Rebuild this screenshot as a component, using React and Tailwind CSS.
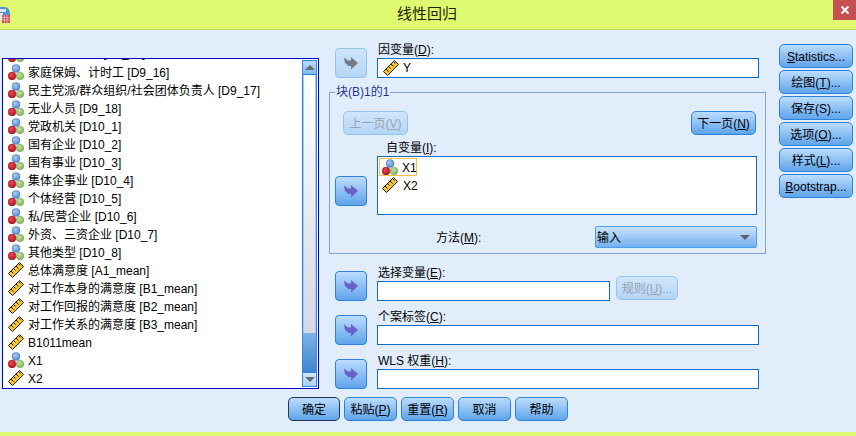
const variables = [
  ["n", "个体工商业户 [D9_15]"],
  ["n", "家庭保姆、计时工 [D9_16]"],
  ["n", "民主党派/群众组织/社会团体负责人 [D9_17]"],
  ["n", "无业人员 [D9_18]"],
  ["n", "党政机关 [D10_1]"],
  ["n", "国有企业 [D10_2]"],
  ["n", "国有事业 [D10_3]"],
  ["n", "集体企事业 [D10_4]"],
  ["n", "个体经营 [D10_5]"],
  ["n", "私/民营企业 [D10_6]"],
  ["n", "外资、三资企业 [D10_7]"],
  ["n", "其他类型 [D10_8]"],
  ["s", "总体满意度 [A1_mean]"],
  ["s", "对工作本身的满意度 [B1_mean]"],
  ["s", "对工作回报的满意度 [B2_mean]"],
  ["s", "对工作关系的满意度 [B3_mean]"],
  ["s", "B1011mean"],
  ["n", "X1"],
  ["s", "X2"],
];

const NominalIcon = () => (
  <svg width="16" height="16" viewBox="0 0 16 16" className="shrink-0">
    <defs>
      <radialGradient id="ballBlue" cx="0.4" cy="0.35" r="0.7">
        <stop offset="0" stopColor="#a9cdf2" />
        <stop offset="1" stopColor="#4f86c9" />
      </radialGradient>
      <radialGradient id="ballGreen" cx="0.4" cy="0.35" r="0.7">
        <stop offset="0" stopColor="#c6e3a2" />
        <stop offset="1" stopColor="#7fae55" />
      </radialGradient>
      <radialGradient id="ballRed" cx="0.4" cy="0.35" r="0.7">
        <stop offset="0" stopColor="#ee4a52" />
        <stop offset="1" stopColor="#a81420" />
      </radialGradient>
    </defs>
    <circle cx="8" cy="4.5" r="4" fill="url(#ballBlue)" stroke="#4a78b8" strokeWidth="0.5" />
    <circle cx="12" cy="12" r="3.8" fill="url(#ballGreen)" stroke="#6f9c4a" strokeWidth="0.5" />
    <circle cx="4" cy="12" r="3.9" fill="url(#ballRed)" stroke="#8e1a20" strokeWidth="0.5" />
  </svg>
);

const RulerIcon = () => (
  <svg width="16" height="16" viewBox="0 0 16 16" className="shrink-0">
    <path d="M0.5 11.5 L11.5 0.5 L15.5 4.5 L4.5 15.5 Z" fill="#f6c62e" stroke="#1f1a06" strokeWidth="1" />
    <path d="M3 9 L5.5 11.5 M5.5 6.5 L7.5 8.5 M8 4 L10.5 6.5 M10.5 1.5 L12.5 3.5" stroke="#1f1a06" strokeWidth="1" />
  </svg>
);

const VarIcon = ({ type }) => (type === "n" ? <NominalIcon /> : <RulerIcon />);

const MoveArrow = ({ color }) => (
  <svg width="16" height="16" viewBox="0 0 16 16">
    <path d="M1 2.5 L5 5.5 H8 V2 L15 8 L8 14.5 V11 H5.5 L2 8 Z" fill={color} />
  </svg>
);

const ArrowBtn = ({ disabled }) => (
  <button
    className={`w-[32px] h-[30px] shrink-0 rounded-[4px] border flex items-center justify-center ${
      disabled
        ? "border-[#93c3f0] bg-gradient-to-b from-[#cfe5fb] to-[#b4d5f7]"
        : "border-[#2a83dc] bg-gradient-to-b from-[#bcdcfc] to-[#5ea4ea]"
    }`}
  >
    <MoveArrow color={disabled ? "#757b84" : "#6a61cb"} />
  </button>
);

const Btn = ({ children, className = "", disabled, primary }) => (
  <button
    className={`h-[24px] shrink-0 rounded-[5px] border pt-[1px] text-[12px] whitespace-nowrap flex items-center justify-center ${
      primary
        ? "border-[#22364d] text-black bg-gradient-to-b from-[#bcdcfc] to-[#5ea4ea]"
        : disabled
          ? "border-[#93c3f0] text-[#98a4b0] bg-gradient-to-b from-[#cfe5fb] to-[#b4d5f7]"
          : "border-[#2a83dc] text-black bg-gradient-to-b from-[#bcdcfc] to-[#5ea4ea]"
    } ${className}`}
  >
    {children}
  </button>
);

const Label = ({ children, className = "" }) => (
  <div className={`h-[16px] leading-[16px] text-[12px] text-black whitespace-nowrap ${className}`}>{children}</div>
);

const Field = ({ className = "", children }) => (
  <div className={`h-[20px] bg-white border border-[#0f6cc4] flex items-center ${className}`}>{children}</div>
);

const Scrollbar = () => (
  <div className="w-[15px] shrink-0 my-[1px] mr-[1px] flex flex-col border border-[#2a8ae6]">
    <div className="h-[14px] bg-gradient-to-b from-[#bcdcfc] to-[#7fb9f2] border-b border-[#2a8ae6] flex items-center justify-center">
      <div className="w-0 h-0 border-x-[5px] border-x-transparent border-b-[5px] border-b-[#666c72]" />
    </div>
    <div className="flex-1 bg-gradient-to-b from-white to-[#d6d8e4] border-x border-[#a9c8ea]" />
    <div className="h-[39px] bg-gradient-to-b from-[#7fb2e6] to-[#3f86cf]" />
    <div className="h-[14px] bg-gradient-to-b from-[#d5e8fb] to-[#a9d0f6] border-t border-[#2a8ae6] flex items-center justify-center">
      <div className="w-0 h-0 border-x-[5px] border-x-transparent border-t-[5px] border-t-[#666c72]" />
    </div>
  </div>
);

const App = () => {
  return (
    <div className="w-[856px] h-[436px] overflow-hidden flex flex-col bg-[#e1edfb] font-['Liberation_Sans','Noto_Sans_CJK_SC',sans-serif] text-[12px] text-black">
      <div className="h-[30px] shrink-0 bg-[#dff971] border-b border-[#c3d860] flex items-start">
        <svg width="10" height="17" viewBox="0 0 10 17" className="mt-[6px] shrink-0">
          <path d="M0 1 H5 Q10 2 10 8 V10 H0 Z" fill="#4d94d6" />
          <rect x="0" y="3" width="6" height="3" fill="#e8e3ea" />
          <rect x="0" y="7" width="3" height="7" fill="#f1e9e6" />
          <rect x="2" y="9" width="8" height="8" fill="#d5475a" />
          <path d="M2 11.5 H10 M2 14 H10 M4.5 9 V17 M7 9 V17" stroke="#f4c8cf" strokeWidth="0.7" />
        </svg>
        <div className="flex-1 text-center text-[15px] leading-[28px] pl-[11px] text-[#1c2208]">线性回归</div>
        <div className="w-[23px] h-[20px] bg-[#c75050] flex items-center justify-center">
          <svg width="10" height="10" viewBox="0 0 10 10">
            <path d="M1.5 1.5 L8.5 8.5 M8.5 1.5 L1.5 8.5" stroke="#fff" strokeWidth="2" />
          </svg>
        </div>
      </div>

      <div className="flex-1 flex flex-col">
        <div className="flex items-start">
          {/* variable list */}
          <div className="ml-[2px] mt-[28px] w-[317px] h-[331px] shrink-0 bg-white border border-[#0000c8] flex overflow-hidden">
            <div className="flex-1 overflow-hidden">
              <div className="-mt-[14px] pl-[5px]">
                {variables.map(([type, name], i) => (
                  <div key={name} className="h-[18px] flex items-center gap-[4px] whitespace-nowrap">
                    <VarIcon type={type} />
                    <span className={i === 0 ? "relative -top-[1px]" : "relative top-[1px]"}>{name}</span>
                  </div>
                ))}
              </div>
            </div>
            <Scrollbar />
          </div>

          {/* centre column */}
          <div className="ml-[10px] w-[437px] shrink-0 pt-[12px]">
            <div className="flex items-end pl-[6px] gap-[10px]">
              <ArrowBtn disabled />
              <div className="flex-1">
                <Label className="pl-[1px]">
                  因变量(<u>D</u>):
                </Label>
                <Field className="w-[382px] pl-[5px] gap-[4px]">
                  <RulerIcon />
                  <span>Y</span>
                </Field>
              </div>
            </div>

            <fieldset className="mt-[7px] border border-[#7fa6d2] pb-[5px] min-w-0">
              <legend className="ml-[5px] px-[1px] text-[#27348f] leading-[14px] text-[12px]">块(B)1的1</legend>
              <div className="mt-[12px] pl-[13px] pr-[9px] flex justify-between">
                <Btn disabled className="w-[65px]">
                  上一页(<u>V</u>)
                </Btn>
                <Btn className="w-[65px]">
                  下一页(<u>N</u>)
                </Btn>
              </div>
              <div className="pl-[5px] flex items-start gap-[10px]">
                <div className="mt-[41px]">
                  <ArrowBtn />
                </div>
                <div className="w-[380px] mt-[5px]">
                  <Label className="pl-[9px]">
                    自变量(<u>I</u>):
                  </Label>
                  <div className="h-[59px] bg-white border border-[#0f6cc4] pl-[1px] pt-[1px]">
                    <div className="w-[38px] h-[18px] border border-[#f5c242] flex items-center gap-[4px] pl-[2px]">
                      <NominalIcon />
                      <span className="relative top-[1px]">X1</span>
                    </div>
                    <div className="h-[18px] flex items-center gap-[5px] pl-[3px]">
                      <RulerIcon />
                      <span className="relative top-[1px]">X2</span>
                    </div>
                  </div>
                </div>
              </div>
              <div className="mt-[11px] flex items-center pr-[8px]">
                <div className="ml-[106px] mt-[1px]">
                  方法(<u>M</u>):
                </div>
                <div className="ml-auto w-[162px] h-[22px] rounded-[2px] border border-[#49a0ee] bg-gradient-to-b from-[#cbe2fb] to-[#74b0ee] flex items-center justify-between pl-[1px] pr-[6px]">
                  <span className="relative top-[1px]">输入</span>
                  <div className="w-0 h-0 border-x-[5px] border-x-transparent border-t-[5px] border-t-[#5f646a]" />
                </div>
              </div>
            </fieldset>

            <div className="mt-[11px] flex flex-col gap-[8px] pl-[6px]">
              <div className="flex items-end gap-[10px]">
                <ArrowBtn />
                <div>
                  <Label className="pl-[1px]">
                    选择变量(<u>E</u>):
                  </Label>
                  <div className="h-[20px] flex items-end gap-[6px]">
                    <Field className="w-[233px]" />
                    <Btn disabled className="w-[62px] mb-[1px]">
                      规则(<u>U</u>)...
                    </Btn>
                  </div>
                </div>
              </div>
              <div className="flex items-end gap-[10px]">
                <ArrowBtn />
                <div>
                  <Label className="pl-[1px]">
                    个案标签(<u>C</u>):
                  </Label>
                  <Field className="w-[382px]" />
                </div>
              </div>
              <div className="flex items-end gap-[10px]">
                <ArrowBtn />
                <div>
                  <Label className="pl-[1px]">
                    WLS 权重(<u>H</u>):
                  </Label>
                  <Field className="w-[382px]" />
                </div>
              </div>
            </div>
          </div>

          {/* side buttons */}
          <div className="ml-[13px] mt-[14px] w-[74px] flex flex-col gap-[2px]">
            <Btn>
              <u>S</u>tatistics...
            </Btn>
            <Btn>
              绘图(<u>T</u>)...
            </Btn>
            <Btn>
              保存(S)...
            </Btn>
            <Btn>
              选项(<u>O</u>)...
            </Btn>
            <Btn>
              样式(<u>L</u>)...
            </Btn>
            <Btn>
              <u>B</u>ootstrap...
            </Btn>
          </div>
        </div>

        <div className="mt-[8px] pl-[288px] flex gap-[4px]">
          <Btn primary className="w-[52px]">
            确定
          </Btn>
          <Btn className="w-[53px]">
            粘贴(<u>P</u>)
          </Btn>
          <Btn className="w-[53px]">
            重置(<u>R</u>)
          </Btn>
          <Btn className="w-[53px]">取消</Btn>
          <Btn className="w-[53px]">帮助</Btn>
        </div>
      </div>

      <div className="h-[4px] shrink-0 bg-[#dff971]" />
    </div>
  );
};

export default App;
